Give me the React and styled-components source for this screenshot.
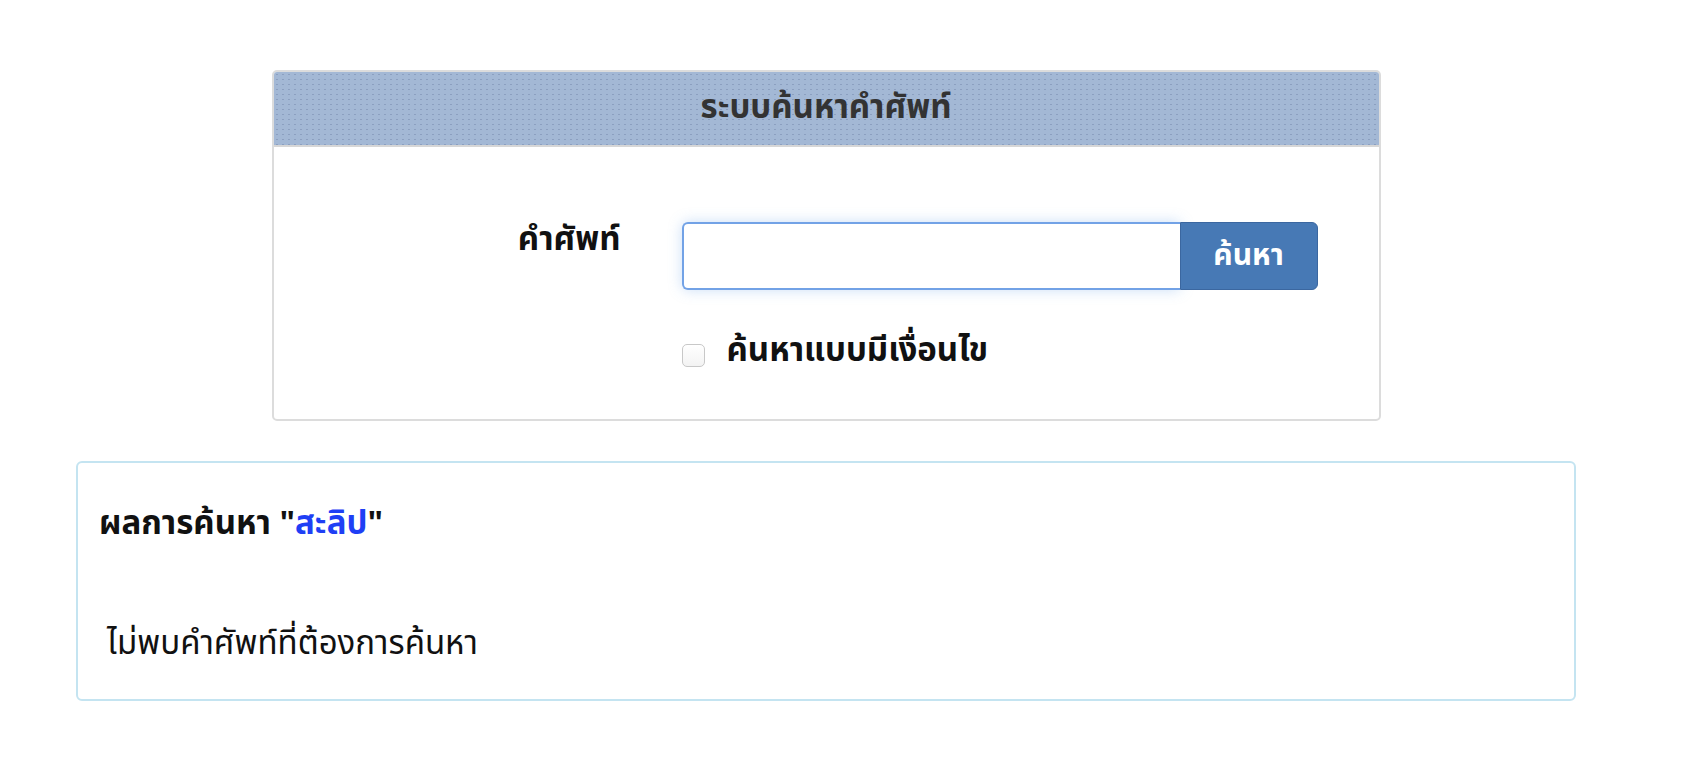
import React from "react";
import styled, { createGlobalStyle } from "styled-components";

const GlobalStyle = createGlobalStyle`
  html, body {
    margin: 0;
    padding: 0;
    background: #ffffff;
    font-family: "Noto Sans Thai", "Noto Sans", "DejaVu Sans", sans-serif;
    color: #111;
  }
`;

const Page = styled.div`
  width: 1500px;
  margin-left: 76px;
  padding-top: 70px;
  padding-bottom: 60px;
  display: flex;
  flex-direction: column;
  align-items: center;
`;

const Panel = styled.section`
  width: 1109px;
  box-sizing: border-box;
  border: 2px solid #dcdcdc;
  border-radius: 5px;
  overflow: hidden;
  background: #fff;
`;

const PanelHeader = styled.header`
  height: 75px;
  box-sizing: border-box;
  border-bottom: 2px solid #d6d6d6;
  background-color: #a3b8d5;
  background-image: radial-gradient(rgba(120, 140, 175, 0.55) 0.6px, transparent 0.9px);
  background-size: 6px 5px;
  display: flex;
  align-items: center;
  justify-content: center;
`;

const Title = styled.h1`
  margin: 0;
  font-size: 33px;
  line-height: 1.3;
  font-weight: 700;
  color: #333;
`;

const PanelBody = styled.div`
  height: 272px;
  box-sizing: border-box;
  padding-top: 75px;
  display: grid;
  grid-template-columns: 347px 636px;
  column-gap: 61px;
  row-gap: 40px;
  align-content: start;
`;

const FieldLabel = styled.label`
  justify-self: end;
  font-size: 33px;
  font-weight: 700;
  line-height: 1;
  padding-top: 2px;
  color: #111;
`;

const InputGroup = styled.div`
  display: flex;
  height: 68px;
`;

const TextInput = styled.input`
  flex: 1;
  min-width: 0;
  box-sizing: border-box;
  height: 68px;
  border: 2px solid #72a2e6;
  border-right: none;
  border-radius: 6px 0 0 6px;
  box-shadow: 0 0 14px rgba(102, 160, 233, 0.35);
  outline: none;
  font-size: 26px;
  padding: 0 14px;
`;

const SearchButton = styled.button`
  width: 138px;
  height: 68px;
  box-sizing: border-box;
  border: 1px solid #3b67a0;
  border-radius: 0 6px 6px 0;
  background: #4779b5;
  color: #fff;
  font-family: inherit;
  font-size: 30px;
  font-weight: 700;
  cursor: pointer;
  padding: 0;
`;

const CheckRow = styled.div`
  grid-column: 2;
  display: flex;
  align-items: center;
  gap: 22px;
  height: 43px;
`;

const CheckBox = styled.span`
  width: 23px;
  height: 23px;
  box-sizing: border-box;
  border: 1px solid #c8c8c8;
  border-radius: 5px;
  background: linear-gradient(#fff, #f3f3f3);
  margin-top: 8px;
`;

const CheckLabel = styled.span`
  font-size: 33px;
  line-height: 1.3;
  font-weight: 700;
  color: #111;
`;

const Results = styled.section`
  margin-top: 40px;
  width: 1500px;
  height: 240px;
  box-sizing: border-box;
  border: 2px solid #c4e4f1;
  border-radius: 6px;
  padding: 40px 21px 0;
`;

const ResultTitle = styled.h2`
  margin: 0;
  font-size: 33px;
  line-height: 1.3;
  font-weight: 700;
  color: #111;
`;

const Keyword = styled.span`
  color: #1f3ff5;
`;

const Message = styled.p`
  margin: 77px 0 0 8px;
  font-size: 33px;
  line-height: 1.3;
  font-weight: 400;
  color: #111;
`;

export default function App() {
  return (
    <>
      <GlobalStyle />
      <Page>
        <Panel>
          <PanelHeader>
            <Title>ระบบค้นหาคำศัพท์</Title>
          </PanelHeader>
          <PanelBody>
            <FieldLabel htmlFor="word">คำศัพท์</FieldLabel>
            <InputGroup>
              <TextInput id="word" type="text" />
              <SearchButton type="button">ค้นหา</SearchButton>
            </InputGroup>
            <CheckRow>
              <CheckBox />
              <CheckLabel>ค้นหาแบบมีเงื่อนไข</CheckLabel>
            </CheckRow>
          </PanelBody>
        </Panel>
        <Results>
          <ResultTitle>
            ผลการค้นหา "<Keyword>สะลิป</Keyword>"
          </ResultTitle>
          <Message>ไม่พบคำศัพท์ที่ต้องการค้นหา</Message>
        </Results>
      </Page>
    </>
  );
}
